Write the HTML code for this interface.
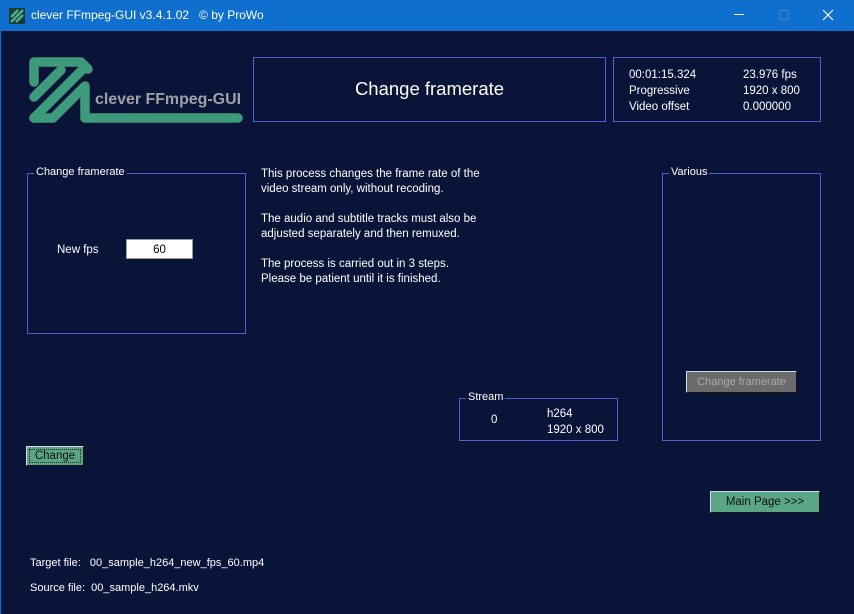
<!DOCTYPE html>
<html><head><meta charset="utf-8"><style>
*{margin:0;padding:0;box-sizing:border-box}
body{width:854px;height:614px;background:#0a1438;font-family:"Liberation Sans",sans-serif;color:#fff;font-size:11.5px;position:relative;overflow:hidden}
.a{position:absolute;white-space:nowrap}
.tb{position:absolute;left:0;top:0;width:854px;height:31px;background:#0e6fcf}
.win{position:absolute;left:0;top:31px;width:854px;height:583px;background:#0a1438;border-left:1px solid #0e6fcf}
.box{position:absolute;border:1px solid #4f5fd0}
.gb{position:absolute;border:1px solid #4f5fd0}
.gb span{position:absolute;top:-8px;left:6px;background:#0a1438;padding:0 2px;font-size:11px}
.btn{position:absolute;background:#5aa487;color:#111;font-size:11.5px;text-align:center;border:1px solid #cde;border-right-color:#111;border-bottom-color:#111}
</style></head><body>
<div class="tb"></div>
<svg class="a" style="left:9px;top:8px" width="16" height="16"><rect width="16" height="16" fill="#1a3a3a"/><path d="M2 14L14 2M2 9L9 2M7 14L14 7" stroke="#4fb08a" stroke-width="2.5"/></svg>
<div class="a" style="left:31px;top:8px;font-size:12px">clever FFmpeg-GUI v3.4.1.02 &nbsp; © by ProWo</div>
<div class="a" style="left:734px;top:14px;width:10px;height:1px;background:#fff"></div>
<div class="a" style="left:779px;top:10px;width:10px;height:10px;border:1px solid #3f7fcf"></div>
<svg class="a" style="left:822px;top:9px" width="12" height="12"><path d="M1 1L11 11M11 1L1 11" stroke="#fff" stroke-width="1.2"/></svg>
<div class="win"></div>
<svg class="a" style="left:25px;top:52px" width="222" height="75">
<g fill="none" stroke="#3d9a7a" stroke-width="9.5" stroke-linejoin="round" stroke-linecap="round">
<path d="M9 30 V10 H56 L63 17"/>
<path d="M9 45 L36 18"/>
<path d="M9 66 L58 17"/>
<path d="M28 66 L60 34 V66 H213"/>
<path d="M9 66 H28"/>
</g>
<text x="70" y="52" font-family="Liberation Sans" font-weight="bold" font-size="15.5" fill="#a0a0a8" textLength="146" lengthAdjust="spacingAndGlyphs">clever FFmpeg-GUI</text>
</svg>
<div class="box" style="left:253px;top:57px;width:353px;height:65px"></div>
<div class="a" style="left:253px;top:78px;width:353px;text-align:center;font-size:18.5px">Change framerate</div>
<div class="box" style="left:613px;top:57px;width:208px;height:65px"></div>
<div class="a" style="left:629px;top:67px;line-height:16px">00:01:15.324<br>Progressive<br>Video offset</div>
<div class="a" style="left:743px;top:67px;line-height:16px">23.976 fps<br>1920 x 800<br>0.000000</div>
<div class="gb" style="left:27px;top:173px;width:219px;height:161px"><span>Change framerate</span></div>
<div class="a" style="left:57px;top:244px">New fps</div>
<div class="a" style="left:126px;top:239px;width:67px;height:20px;background:#fff;color:#000;text-align:center;line-height:20px;border:1px solid #999">60</div>
<div class="a" style="left:261px;top:167px;line-height:15px">This process changes the frame rate of the<br>video stream only, without recoding.<br><br>The audio and subtitle tracks must also be<br>adjusted separately and then remuxed.<br><br>The process is carried out in 3 steps.<br>Please be patient until it is finished.</div>
<div class="gb" style="left:662px;top:173px;width:159px;height:268px"><span>Various</span></div>
<div class="btn" style="left:686px;top:371px;width:111px;height:22px;line-height:20px;background:#6b6b6b;color:#aaa;font-size:11px">Change framerate</div>
<div class="gb" style="left:459px;top:398px;width:159px;height:43px"><span>Stream</span></div>
<div class="a" style="left:491px;top:414px">0</div>
<div class="a" style="left:547px;top:406px;line-height:16px">h264<br>1920 x 800</div>
<div class="btn" style="left:26px;top:446px;width:58px;height:20px;line-height:18px"><div style="position:absolute;inset:2px;border:1px dotted #222"></div>Change</div>
<div class="btn" style="left:710px;top:491px;width:110px;height:22px;line-height:20px">Main Page &gt;&gt;&gt;</div>
<div class="a" style="left:30px;top:557px;font-size:11px">Target file: &nbsp;&nbsp;00_sample_h264_new_fps_60.mp4</div>
<div class="a" style="left:30px;top:582px;font-size:11px">Source file: &nbsp;00_sample_h264.mkv</div>
</body></html>
